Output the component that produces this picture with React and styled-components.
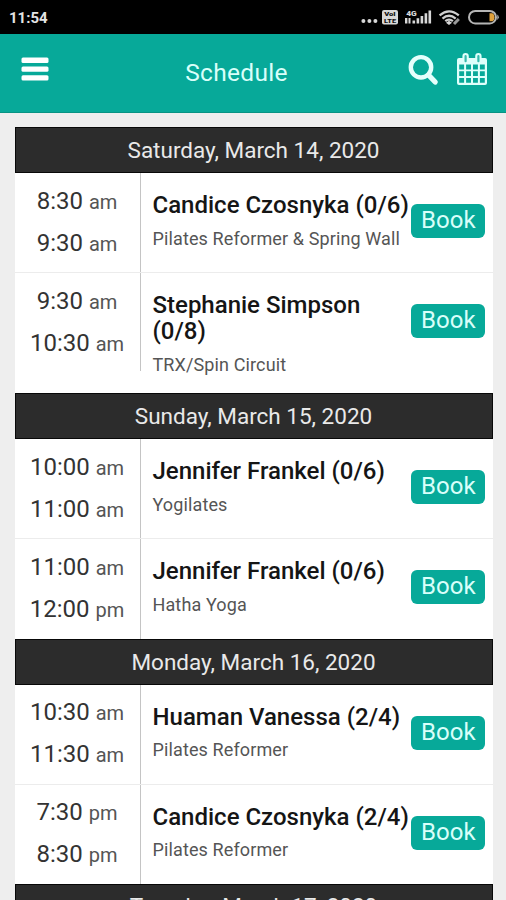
import React from "react";
import styled, { createGlobalStyle } from "styled-components";

const GlobalStyle = createGlobalStyle`
  * { box-sizing: border-box; }
  body { margin: 0; background: #eee; font-family: Roboto, "Liberation Sans", sans-serif; }
`;

const Screen = styled.div`
  width: 506px;
  height: 900px;
  overflow: hidden;
  background: #eee;
`;

const StatusBar = styled.div`
  height: 34px;
  padding: 2px 6px 0 9px;
  display: flex;
  align-items: center;
  justify-content: space-between;
  background: #000;
`;

const Clock = styled.span`
  color: #e4e4e4;
  font-size: 15px;
  font-weight: 700;
  line-height: 18px;
`;

const StatusGlyphs = styled.svg`
  margin-top: 2px;
`;

const TopBar = styled.header`
  height: 79px;
  padding: 0 19px 7px 22px;
  display: grid;
  grid-template-columns: 61px 1fr 79px;
  align-items: center;
  background: #07a999;
  border-bottom: 1px solid #079383;
`;

const Glyph = styled.svg`
  overflow: visible;
`;

const Title = styled.h1`
  margin: 7px 0 0;
  padding-right: 18px;
  text-align: center;
  color: #d9fffa;
  font-size: 24.5px;
  font-weight: 400;
  line-height: 30px;
  letter-spacing: 0.3px;
`;

const Actions = styled.div`
  display: flex;
  justify-content: space-between;
  align-items: center;
`;

const List = styled.main`
  margin: 14px 13.5px 0 14.5px;
`;

const DayHeader = styled.h2`
  height: 46px;
  margin: 0;
  padding-bottom: ${(p) => (p.$raised ? 3 : 0)}px;
  display: flex;
  align-items: center;
  justify-content: center;
  background: #2c2c2c;
  border: 1px solid #080808;
  color: #e9e9e9;
  font-size: 22.5px;
  font-weight: 400;
`;

const Row = styled.article`
  height: ${(p) => (p.$tall ? 120 : p.$last ? 99.7 : 100)}px;
  display: grid;
  grid-template-columns: 126px 1fr 82px;
  background: #fff;
  border-bottom: ${(p) => (p.$last ? 0 : 1)}px solid #ececec;
`;

const Times = styled.div`
  height: ${(p) => (p.$tall ? "98px" : "100%")};
  padding-top: 6.6px;
  border-right: 1px solid #c4c4c4;
  text-align: center;
`;

const Time = styled.div`
  height: 42px;
  color: #333;
  font-size: 24px;
  font-weight: 400;
  line-height: 42px;
  white-space: nowrap;
`;

const Meridiem = styled.span`
  color: #555;
  font-size: 20px;
  line-height: 1;
`;

const Details = styled.div`
  padding: 19px 0 0 12px;
`;

const Trainer = styled.h3`
  margin: 0;
  color: #151515;
  font-size: 24px;
  font-weight: 500;
  line-height: 26px;
  white-space: pre;
`;

const Activity = styled.p`
  margin: 9.6px 0 0;
  color: #555;
  font-size: 18px;
  line-height: 22px;
  letter-spacing: 0.12px;
  white-space: nowrap;
`;

const BookButton = styled.button`
  width: 74px;
  height: 34px;
  margin: 31px 0 0 0.8px;
  padding: 0 0 2px;
  border: 0;
  border-radius: 6px;
  background: #07a999;
  color: #d9fffa;
  font: 400 24px/32px Roboto, sans-serif;
`;

const days = [
  {
    date: "Saturday, March 14, 2020",
    classes: [
      { start: "8:30 am", end: "9:30 am", trainer: "Candice Czosnyka (0/6)", activity: "Pilates Reformer & Spring Wall" },
      { start: "9:30 am", end: "10:30 am", trainer: "Stephanie Simpson\n(0/8)", activity: "TRX/Spin Circuit", tall: true },
    ],
  },
  {
    date: "Sunday, March 15, 2020",
    classes: [
      { start: "10:00 am", end: "11:00 am", trainer: "Jennifer Frankel (0/6)", activity: "Yogilates" },
      { start: "11:00 am", end: "12:00 pm", trainer: "Jennifer Frankel (0/6)", activity: "Hatha Yoga" },
    ],
  },
  {
    date: "Monday, March 16, 2020",
    classes: [
      { start: "10:30 am", end: "11:30 am", trainer: "Huaman Vanessa (2/4)", activity: "Pilates Reformer" },
      { start: "7:30 pm", end: "8:30 pm", trainer: "Candice Czosnyka (2/4)", activity: "Pilates Reformer" },
    ],
  },
  { date: "Tuesday, March 17, 2020", classes: [] },
];

function StatusIcons() {
  return (
    <StatusGlyphs width="140" height="20" viewBox="0 0 140 20">
      <g fill="#d8d8d8">
        <circle cx="3.4" cy="12" r="2" />
        <circle cx="9.4" cy="12" r="2" />
        <circle cx="15.4" cy="12" r="2" />
        <rect x="22" y="1" width="16" height="14.5" rx="2" />
        <rect x="45" y="9" width="2.4" height="5.5" />
        <rect x="48.5" y="9" width="2" height="5.5" />
        <path d="M52.5 14.5v-3h2.6v3zM56.6 14.5V9.2h2.6v5.3zM60.6 14.5V7h2.6v7.5zM64.6 14.5V4.3h2.6v10.2zM68.5 14.5V1.5h2.6v13z" />
      </g>
      <g fontFamily="Roboto, sans-serif" fontWeight="900">
        <text x="24.2" y="7.3" fontSize="5.8" fill="#111" textLength="11.5" lengthAdjust="spacingAndGlyphs">VoI</text>
        <text x="24" y="14.2" fontSize="6" fill="#111" textLength="12" lengthAdjust="spacingAndGlyphs">LTE</text>
        <text x="46.3" y="6.6" fontSize="8" fill="#d8d8d8" textLength="10.5" lengthAdjust="spacingAndGlyphs">4G</text>
      </g>
      <g fill="none" stroke="#d0d0d0" strokeWidth="2.3">
        <path d="M79.6 6.4Q89 -1.6 98.8 6.4M82.5 9.6Q89 4 95.7 9.6M85.3 12.2Q89 9 92.9 12.2" />
        <path d="M94 15l4.8-5" strokeWidth="3" stroke="#999" />
      </g>
      <path d="M89 11.8l3 2-3 2.2-3-2.2z" fill="#d8d8d8" />
      <rect x="109" y="2" width="27" height="12.4" rx="6.2" fill="none" stroke="#b5b5b5" strokeWidth="2" />
      <path d="M137.3 5.5q3 2.6 0 5.4z" fill="#b5b5b5" />
      <path d="M129.5 4.2h3q2 1 2 4t-2 4h-3z" fill="#e0a13b" />
    </StatusGlyphs>
  );
}

function MenuIcon() {
  return (
    <Glyph width="28" height="26" viewBox="0 0 28 26" fill="#fff">
      <rect x="-0.5" y="0.6" width="27" height="5.3" rx="1.5" />
      <rect x="-0.5" y="9.4" width="27" height="5.3" rx="1.5" />
      <rect x="-0.5" y="18.2" width="27" height="5.3" rx="1.5" />
    </Glyph>
  );
}

function SearchIcon() {
  return (
    <Glyph width="30" height="32" viewBox="0 0 30 32" fill="none" stroke="#e5fffc">
      <circle cx="13" cy="13.3" r="10.2" strokeWidth="4.4" />
      <path d="M20.5 21l6.7 7" strokeWidth="5.2" strokeLinecap="round" />
    </Glyph>
  );
}

function CalendarIcon() {
  return (
    <Glyph width="30" height="34" viewBox="0 0 30 34">
      <path
        fill="#dffffb"
        fillRule="evenodd"
        d="M2 5h3.4V3.2a3.2 3.2 0 0 1 6.4 0V5h6.4V3.2a3.2 3.2 0 0 1 6.4 0V5H28q2 0 2 2v23q0 2-2 2H2q-2 0-2-2V7q0-2 2-2zM2.2 11.5v4.9h4.9v-4.9zM9.1 11.5v4.9h4.9v-4.9zM16 11.5v4.9h4.9v-4.9zM22.9 11.5v4.9h4.9v-4.9zM2.2 18.3v4.8h4.9v-4.8zM9.1 18.3v4.8h4.9v-4.8zM16 18.3v4.8h4.9v-4.8zM22.9 18.3v4.8h4.9v-4.8zM2.2 25v4.8h4.9v-4.8zM9.1 25v4.8h4.9v-4.8zM16 25v4.8h4.9v-4.8zM22.9 25v4.8h4.9v-4.8z"
      />
      <path d="M8.6 3.2v5M21.4 3.2v5" stroke="#36b9ac" strokeWidth="2.2" strokeLinecap="round" />
    </Glyph>
  );
}

function TimeLabel({ value }) {
  const [clock, half] = value.split(" ");
  return (
    <Time>
      {clock} <Meridiem>{half}</Meridiem>
    </Time>
  );
}

function ClassRow({ item, last }) {
  return (
    <Row $tall={item.tall} $last={last}>
      <Times $tall={item.tall}>
        <TimeLabel value={item.start} />
        <TimeLabel value={item.end} />
      </Times>
      <Details>
        <Trainer>{item.trainer}</Trainer>
        <Activity>{item.activity}</Activity>
      </Details>
      <BookButton>Book</BookButton>
    </Row>
  );
}

export default function App() {
  return (
    <Screen>
      <GlobalStyle />
      <StatusBar>
        <Clock>11:54</Clock>
        <StatusIcons />
      </StatusBar>
      <TopBar>
        <MenuIcon />
        <Title>Schedule</Title>
        <Actions>
          <SearchIcon />
          <CalendarIcon />
        </Actions>
      </TopBar>
      <List>
        {days.map((day) => (
          <section key={day.date}>
            <DayHeader $raised={day.classes.length === 0}>{day.date}</DayHeader>
            {day.classes.map((item, i) => (
              <ClassRow key={item.start} item={item} last={i === day.classes.length - 1} />
            ))}
          </section>
        ))}
      </List>
    </Screen>
  );
}
